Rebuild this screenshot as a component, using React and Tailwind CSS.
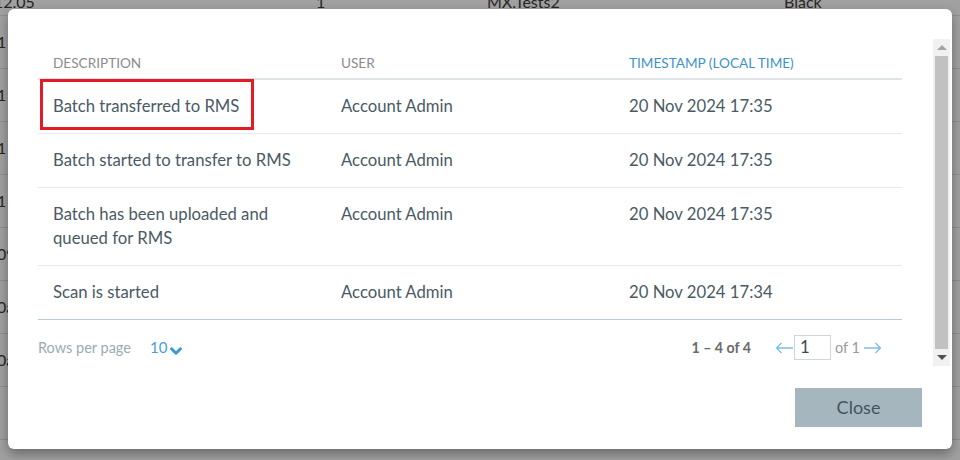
import { ChevronDown } from 'lucide-react';

const events = [
    { text: 'Batch transferred to RMS', user: 'Account Admin', time: '20 Nov 2024 17:35', marked: true },
    { text: 'Batch started to transfer to RMS', user: 'Account Admin', time: '20 Nov 2024 17:35' },
    { text: 'Batch has been uploaded and queued for RMS', user: 'Account Admin', time: '20 Nov 2024 17:35' },
    { text: 'Scan is started', user: 'Account Admin', time: '20 Nov 2024 17:34' },
];

// faint rows of the page behind the dialog
const behind = ['1', '1', '1', '1', '09', '0a', '0a', ''];

function BackgroundPage() {
    return (
        <div className="h-[460px] w-[960px] overflow-hidden bg-[#a1a1a1] text-[16px] text-[#262626]" style={{ fontFamily: 'Lato, sans-serif' }}>
            <div className="-mt-[12px] flex h-[28px] items-center border-b border-[#8f8f8f]">
                <span className="w-[322px] -ml-[6px]">12.05</span>
                <span className="w-[171px]">1</span>
                <span className="w-[297px]">MX.Tests2</span>
                <span>Black</span>
            </div>
            {behind.map((b, i) => (
                <div key={i} className="flex h-[53px] items-center border-b border-[#8f8f8f]">
                    <span className="-ml-[3px]">{b}</span>
                </div>
            ))}
        </div>
    );
}

function Scrollbar() {
    return (
        <div className="flex h-full w-[17px] flex-col bg-[#f1f1f1]">
            <div className="flex h-[17px] items-center justify-center">
                <div className="h-0 w-0 border-x-[5px] border-b-[5px] border-x-transparent border-b-[#a3a3a3]" />
            </div>
            <div className="mx-[2px] flex-1 bg-[#c1c1c1]" />
            <div className="flex h-[17px] items-center justify-center">
                <div className="h-0 w-0 border-x-[5px] border-t-[5px] border-x-transparent border-t-[#505050]" />
            </div>
        </div>
    );
}

function ArrowLeft() {
    return (
        <svg width="19" height="12" viewBox="0 0 19 12" fill="none" stroke="#7cbde4" strokeWidth="1.3">
            <path d="M18 6H1.5M6.5 1L1.5 6l5 5" />
        </svg>
    );
}

function ArrowRight() {
    return (
        <svg width="19" height="12" viewBox="0 0 19 12" fill="none" stroke="#7cbde4" strokeWidth="1.3">
            <path d="M1 6h16.5M12.5 1l5 5-5 5" />
        </svg>
    );
}

export default function App() {
    return (
        <div className="relative h-[460px] w-[960px] overflow-hidden">
            <BackgroundPage />

            <div
                className="absolute left-[8px] top-[9px] flex h-[440px] w-[944px] flex-col rounded-[6px] bg-white shadow-[0_5px_12px_rgba(0,0,0,0.35)]"
                style={{ fontFamily: 'Lato, "Open Sans", sans-serif' }}
            >
                <div className="mt-[30px] flex h-[327px]">
                    <div className="flex-1 pl-[30px]">
                        <div className="w-[864px]">
                            <div className="flex h-[41px] items-end border-b-2 border-[#dfe4e7] pb-[5px] text-[13.6px] uppercase">
                                <div className="w-[288px] pl-[15px] text-[#8c8c8c]">Description</div>
                                <div className="w-[288px] pl-[15px] text-[#8c8c8c]">User</div>
                                <div className="w-[288px] pl-[15px] text-[#3d93c9]">Timestamp (local time)</div>
                            </div>

                            {events.map((e, i) => (
                                <div
                                    key={i}
                                    className={`relative flex pt-[14px] pb-[15px] text-[16.7px] leading-[24px] text-[#4a5a64] ${i < events.length - 1 ? 'border-b border-[#e7ebed]' : 'border-b border-[#b8cdd8]'}`}
                                >
                                    <div className="w-[288px] pl-[15px] pr-[22px]">{e.text}</div>
                                    <div className="w-[288px] pl-[15px]">{e.user}</div>
                                    <div className="w-[288px] pl-[15px]">{e.time}</div>
                                    {e.marked && (
                                        <div className="pointer-events-none absolute left-[2px] top-[-1px] h-[51px] w-[214px] border-[3px] border-[#e31b24]" />
                                    )}
                                </div>
                            ))}

                            <div className="mt-[15px] flex h-[25px] items-center text-[14.5px]">
                                <span className="text-[#9aabb5]">Rows per page</span>
                                <span className="ml-[19px] flex items-center text-[15px] text-[#4aa0d6]">
                                    10
                                    <ChevronDown size={18} strokeWidth={4} className="mt-[6px] text-[#3a9ad6]" />
                                </span>
                                <span className="ml-auto mr-[24px] text-[14.2px] font-bold text-[#6b6b6b]">1 – 4 of 4</span>
                                <ArrowLeft />
                                <div className="flex h-[25px] w-[37px] items-center border border-[#cfd6da] pl-[5px] text-[16.7px] text-[#3b4b55]">1</div>
                                <span className="ml-[4px] text-[#9a9a9a]">of 1</span>
                                <span className="ml-[3px] mr-[20px]"><ArrowRight /></span>
                            </div>
                        </div>
                    </div>
                    <div className="mr-[2px]">
                        <Scrollbar />
                    </div>
                </div>

                <div className="flex justify-end pr-[30px] pt-[22px]">
                    <button className="h-[39px] w-[127px] bg-[#a6b6bf] text-[18px] text-[#3e5461]">Close</button>
                </div>
            </div>
        </div>
    );
}
